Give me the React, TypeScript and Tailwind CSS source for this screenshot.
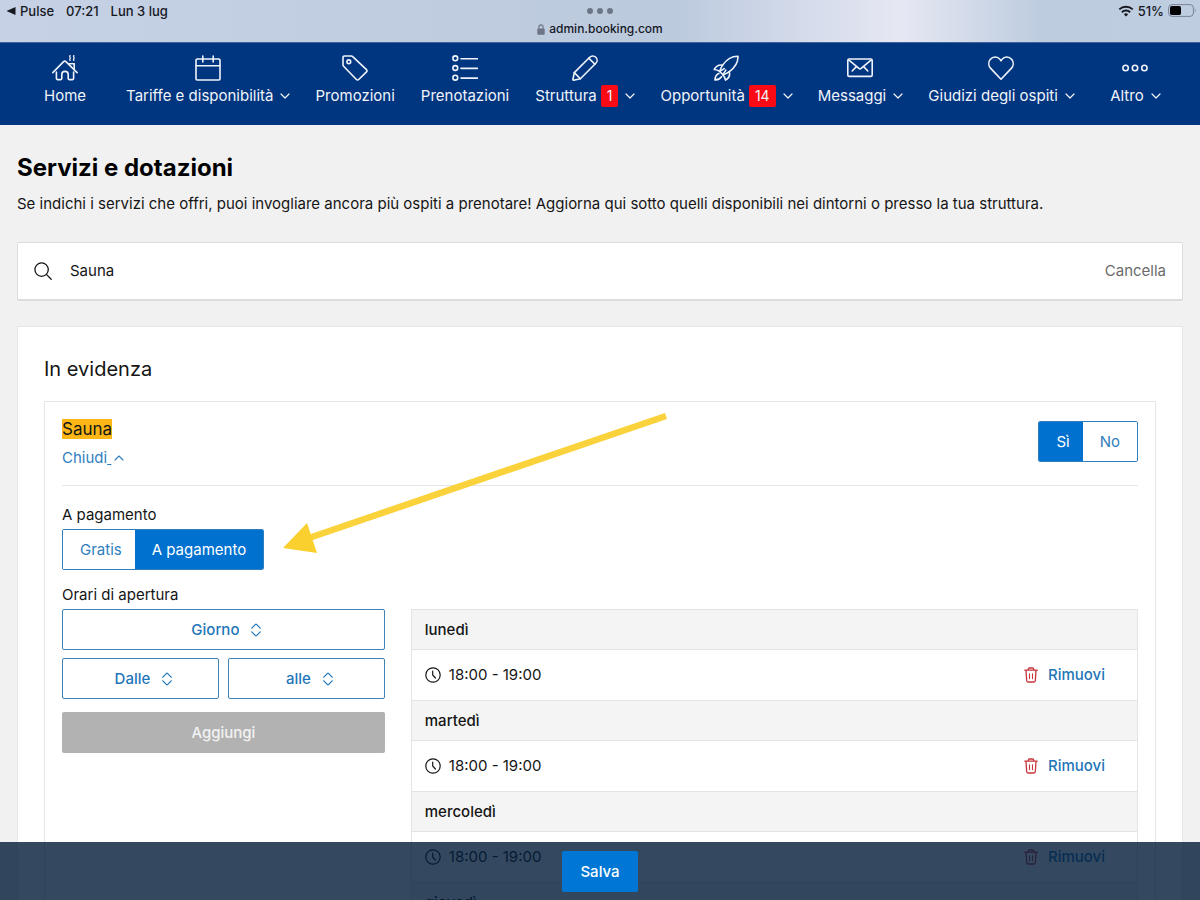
import { useState, type ReactNode } from "react";
import clsx from "clsx";
import { ChevronDown, ChevronUp } from "lucide-react";

type IconProps = { children: ReactNode; className?: string };

function Icon({ children, className = "size-[26px]" }: IconProps) {
  return (
    <svg
      viewBox="0 0 26 26"
      fill="none"
      stroke="currentColor"
      strokeWidth="1.6"
      strokeLinecap="round"
      strokeLinejoin="round"
      aria-hidden="true"
      className={className}
    >
      {children}
    </svg>
  );
}

const icons = {
  home: (
    <Icon>
      <path d="M.8 17.6 11.6 6.6a1.6 1.6 0 0 1 2.3 0l11.2 11" />
      <path d="M4.4 17v6.6a1 1 0 0 0 1 1h3.4a1 1 0 0 0 1-1v-4a3.2 3.2 0 0 1 6.4 0v4a1 1 0 0 0 1 1h3.4a1 1 0 0 0 1-1V17" />
      <path d="M17 8.800h5.200v5.200" />
      <path d="M18 .6c-1 1.300 1 1.900 0 3.200-.5.700-.3 1.200 0 1.600M21.800.6c-1 1.300 1 1.900 0 3.200-.5.700-.3 1.200 0 1.600" strokeWidth="1.3" />
    </Icon>
  ),
  calendar: (
    <Icon>
      <rect x="1" y="4" width="24" height="21" rx="1.2" />
      <path d="M1 10.800h24M7.800 1v6M18.200 1v6" />
    </Icon>
  ),
  tag: (
    <Icon>
      <path d="M2.300 1h7a2 2 0 0 1 1.400.6L24.500 14.600a1.600 1.600 0 0 1 0 2.300l-7.800 7.600a1.600 1.600 0 0 1-2.300 0L1.600 11.300a2 2 0 0 1-.6-1.400V2.300A1.300 1.300 0 0 1 2.300 1z" />
      <circle cx="6.800" cy="6.800" r="1.900" />
    </Icon>
  ),
  list: (
    <Icon>
      <circle cx="3.300" cy="3.300" r="2.400" />
      <circle cx="3.300" cy="13" r="2.400" />
      <circle cx="3.300" cy="22.700" r="2.400" />
      <path d="M9 3.700h16.500M9 13.400h16.500M9 23.100h16.500" />
    </Icon>
  ),
  pencil: (
    <Icon>
      <path d="M2.300 17.600 17.700 2.200a4.200 4.200 0 0 1 6.100 6.100L8.400 23.700l-6.800 1.500a.6.600 0 0 1-.7-.7z" />
      <path d="M2.300 17.600 8.400 23.700M16.800 3.100l6.100 6.100" />
    </Icon>
  ),
  rocket: (
    <Icon>
      <path d="M25 1.200c-6.300-.2-11.300 3.200-15 8.400-1.600 2.300-2.800 4.500-3.300 6.800l3.300 3.300c2.600-.7 4.700-1.900 6.700-3.400C22 12.300 25.200 7.300 25 1.200z" />
      <path d="M9.600 10.200c-3.600-.7-6.400.7-8.400 4.300 2.100.2 3.900.8 5.500 1.900M16.200 16.700c1.100 3.500-.2 6.400-3.700 8.400-.5-2.200-1.300-4-2.500-5.400" />
      <path d="M5.800 18.600c-2.400 1-3.600 3.200-3.900 6.300 2.700.2 4.900-.8 6.600-3.200M6.700 16.400l4.600-2.800M10 19.700l2.800-4.600" />
    </Icon>
  ),
  mail: (
    <Icon>
      <rect x="0.800" y="4" width="24.400" height="17.400" rx="1.400" />
      <path d="M2 5.200 11.900 13.400a1.800 1.800 0 0 0 2.200 0L24 5.200M5.200 16l4.400-4.600M20.800 16 16.400 11.400" />
    </Icon>
  ),
  heart: (
    <Icon>
      <path d="M13 24.200 2.700 13.400C.5 11 .2 7.200 2.200 4.600 4.900 1.200 9.600 1.100 12 4.400l1 1.400 1-1.400c2.400-3.300 7.100-3.200 9.800.2 2 2.600 1.700 6.400-.5 8.800z" />
    </Icon>
  ),
  more: (
    <Icon>
      <circle cx="3.600" cy="13" r="2.700" />
      <circle cx="13" cy="13" r="2.700" />
      <circle cx="22.400" cy="13" r="2.700" />
    </Icon>
  ),
};

const navItems = [
  { label: "Home", icon: icons.home },
  { label: "Tariffe e disponibilità", icon: icons.calendar, menu: true },
  { label: "Promozioni", icon: icons.tag },
  { label: "Prenotazioni", icon: icons.list },
  { label: "Struttura", icon: icons.pencil, menu: true, badge: 1 },
  { label: "Opportunità", icon: icons.rocket, menu: true, badge: 14 },
  { label: "Messaggi", icon: icons.mail, menu: true },
  { label: "Giudizi degli ospiti", icon: icons.heart, menu: true },
  { label: "Altro", icon: icons.more, menu: true },
];

const days = ["lunedì", "martedì", "mercoledì", "giovedì"];

function StatusBar() {
  return (
    <div className="grid h-[42px] shrink-0 grid-cols-3 bg-linear-to-r from-[#c6d1e5] via-[#bccade] via-55% to-[#bfcde0] text-[13px] font-medium text-[#15181f]">
      <div className="flex h-[21px] items-center gap-3 pl-1.5">
        <span className="flex items-center gap-1">
          <svg viewBox="0 0 10 10" className="size-2.5" fill="currentColor" aria-hidden="true">
            <path d="M9.500 1v8L.5 5z" />
          </svg>
          Pulse
        </span>
        <span>07:21</span>
        <span>Lun 3 lug</span>
      </div>
      <div className="flex flex-col items-center bg-linear-to-r from-transparent from-70% to-[#d3daea]">
        <div className="flex h-[21px] items-center gap-1">
          <i className="size-1.5 rounded-full bg-[#6d7688]" />
          <i className="size-1.5 rounded-full bg-[#6d7688]" />
          <i className="size-1.5 rounded-full bg-[#6d7688]" />
        </div>
        <div className="flex items-center gap-1 text-xs leading-4">
          <svg viewBox="0 0 8 11" className="h-[11px] w-2" aria-hidden="true">
            <rect x=".3" y="4.600" width="7.400" height="6.100" rx="1" fill="#6d7688" />
            <path d="M1.900 5V3a2.100 2.100 0 0 1 4.200 0v2" fill="none" stroke="#6d7688" strokeWidth="1.100" />
          </svg>
          admin.booking.com
        </div>
      </div>
      <div className="flex justify-end bg-linear-to-r from-[#d3daea] via-[#e6e8f3] via-25% to-transparent to-60%">
        <div className="flex h-[21px] items-center gap-1 pr-1">
          <svg viewBox="0 0 16 12" className="h-3 w-4" fill="none" stroke="currentColor" strokeWidth="1.900" aria-hidden="true">
            <path d="M1.300 4.400a9.600 9.600 0 0 1 13.400 0M3.900 7.200a5.900 5.900 0 0 1 8.200 0" />
            <path d="M8 11.600 5.900 9.400a3 3 0 0 1 4.200 0z" fill="currentColor" stroke="none" />
          </svg>
          51%
          <svg viewBox="0 0 28 13" className="h-[13px] w-7" fill="none" aria-hidden="true">
            <rect x=".6" y=".6" width="24.800" height="11.800" rx="3.400" stroke="#7b8496" />
            <rect x="2" y="2" width="11" height="9" rx="1.800" fill="#000" />
            <path d="M26.800 4.500c1 .4 1 3.600 0 4z" fill="#7b8496" />
          </svg>
        </div>
      </div>
    </div>
  );
}

function NavBar() {
  return (
    <nav className="flex h-[83px] shrink-0 justify-between border-t border-[#3f639b] bg-[#003580] px-[18px] pt-3 text-[#f0f4fa]">
      {navItems.map((item) => (
        <a key={item.label} href="#" className="flex min-w-[94px] flex-col items-center gap-1 px-3">
          {item.icon}
          <span className="flex h-[22px] items-center text-[15px] whitespace-nowrap">
            {item.label}
            {item.badge && (
              <span className="ml-1 rounded-xs bg-[#fa0a14] px-1.5 text-sm leading-[22px]">{item.badge}</span>
            )}
            {item.menu && <ChevronDown className="-mr-1 ml-1 size-4" strokeWidth={1.8} aria-hidden="true" />}
          </span>
        </a>
      ))}
    </nav>
  );
}

type ToggleProps = {
  label: string;
  options: string[];
  value: string;
  onChange: (value: string) => void;
};

function Toggle({ label, options, value, onChange }: ToggleProps) {
  return (
    <div role="group" aria-label={label} className="inline-flex h-[41px] overflow-hidden rounded-xs border border-[#2f7ebd]">
      {options.map((option) => (
        <button
          key={option}
          type="button"
          aria-pressed={option === value}
          onClick={() => onChange(option)}
          className={clsx("px-[17px] first:pr-[13px]", option === value ? "bg-[#0071cf] text-white" : "bg-white text-[#2f7ebd]")}
        >
          {option}
        </button>
      ))}
    </div>
  );
}

function Picker({ name, options, className }: { name: string; options: string[]; className?: string }) {
  return (
    <label
      className={clsx(
        "flex h-[41px] items-center justify-center gap-3 rounded-xs border border-[#3f83b5] bg-white pl-1.5 text-[#1f76b8]",
        className,
      )}
    >
      <select aria-label={name} defaultValue="" className="appearance-none field-sizing-content bg-transparent font-medium outline-none">
        <option value="">{name}</option>
        {options.map((option) => (
          <option key={option}>{option}</option>
        ))}
      </select>
      <svg viewBox="0 0 10 14" className="h-3.5 w-2.5" fill="none" stroke="currentColor" strokeWidth="1.200" strokeLinecap="round" strokeLinejoin="round" aria-hidden="true">
        <path d="M.8 5.200 4.500 1.400a.7.700 0 0 1 1 0L9.200 5.200M.8 8.800l3.700 3.800a.7.700 0 0 0 1 0L9.200 8.800" />
      </svg>
    </label>
  );
}

function DaySlot({ day }: { day: string }) {
  return (
    <section>
      <h4 className="flex h-[41px] items-center border-y border-[#e4e4e4] bg-[#f4f4f4] px-[13px] font-medium">{day}</h4>
      <div className="flex h-[50px] items-center justify-between pr-8 pl-[13px]">
        <span className="flex items-center gap-2">
          <svg viewBox="0 0 16 16" className="size-4" fill="none" stroke="currentColor" strokeWidth="1.200" strokeLinecap="round" aria-hidden="true">
            <circle cx="8" cy="8" r="7.200" />
            <path d="M7.700 4v4l2.700 3" />
          </svg>
          <span>18:00 - 19:00</span>
        </span>
        <button type="button" className="flex items-center gap-2.5 font-medium text-[#1f76b8]">
          <svg viewBox="0 0 14 16" className="h-4 w-3.5" fill="none" stroke="#c8353d" strokeWidth="1.300" strokeLinecap="round" strokeLinejoin="round" aria-hidden="true">
            <path d="M.8 3.200h12.400M4.300 3V2a1 1 0 0 1 1-1h3.400a1 1 0 0 1 1 1v1M2 3.400l.7 10.400a1.300 1.300 0 0 0 1.300 1.200h6a1.300 1.300 0 0 0 1.300-1.200L12 3.400" />
            <path d="M5.500 6.800v4.800M8.500 6.800v4.800" strokeWidth="1.100" />
          </svg>
          Rimuovi
        </button>
      </div>
    </section>
  );
}

export default function App() {
  const [available, setAvailable] = useState("Sì");
  const [price, setPrice] = useState("A pagamento");
  const [query, setQuery] = useState("Sauna");

  return (
    <div className="relative flex h-screen flex-col overflow-hidden bg-[#f1f1f1] font-[Inter,sans-serif] text-[15px] leading-5 text-[#151515]">
      <StatusBar />
      <NavBar />

      <main className="min-h-0 flex-1 overflow-y-auto px-[17px] pt-7 [scrollbar-width:none]">
        <h1 className="text-2xl leading-[30px] font-bold text-black">Servizi e dotazioni</h1>
        <p className="mt-[11px]">
          Se indichi i servizi che offri, puoi invogliare ancora più ospiti a prenotare! Aggiorna qui sotto quelli disponibili nei dintorni o presso la tua struttura.
        </p>

        {/* Search */}
        <div className="mt-7 flex h-[59px] items-center rounded-xs border border-b-2 border-[#dcdcdc] bg-white px-4">
          <svg viewBox="0 0 18 18" className="size-[18px]" fill="none" stroke="currentColor" strokeWidth="1.300" strokeLinecap="round" aria-hidden="true">
            <circle cx="7.600" cy="7.600" r="6.700" />
            <path d="m12.600 12.600 4.600 4.600" />
          </svg>
          <input
            type="text"
            aria-label="Cerca servizi"
            value={query}
            onChange={(e) => setQuery(e.target.value)}
            className="ml-[18px] min-w-0 flex-1 outline-none"
          />
          <button type="button" onClick={() => setQuery("")} className="text-[#6b6b6b]">
            Cancella
          </button>
        </div>

        <div className="mt-[25px] border border-[#e6e6e6] bg-white px-[26px] pt-7 pb-24">
          <h2 className="text-xl leading-7">In evidenza</h2>

          <div className="relative mt-[18px] border border-[#e6e6e6] px-[17px] pb-6">
            <div className="flex items-start justify-between border-b border-[#e6e6e6] pt-4 pb-[17px]">
              <div>
                <h3 className="text-[17px] leading-[22px]">
                  <mark className="bg-[#fcb716] text-inherit">Sauna</mark>
                </h3>
                <button type="button" className="mt-2 flex items-center text-[#2f7ebd]">
                  Chiudi
                  <span className="underline">&nbsp;</span>
                  <ChevronUp className="size-4" strokeWidth={1.6} aria-hidden="true" />
                </button>
              </div>
              <div className="pt-[3px]">
                <Toggle label="Sauna disponibile" options={["Sì", "No"]} value={available} onChange={setAvailable} />
              </div>
            </div>

            <p className="mt-[19px] mb-1">A pagamento</p>
            <div className="flex">
              <Toggle label="A pagamento" options={["Gratis", "A pagamento"]} value={price} onChange={setPrice} />
            </div>

            <p className="mt-[15px] mb-1">Orari di apertura</p>
            <div className="flex items-start gap-[26px]">
              <div className="grid w-[30%] grid-cols-2 gap-x-[9px] gap-y-2">
                <Picker name="Giorno" options={days} className="col-span-2" />
                <Picker name="Dalle" options={["18:00", "19:00"]} />
                <Picker name="alle" options={["18:00", "19:00"]} />
                <button type="button" disabled className="col-span-2 mt-[5px] h-[41px] rounded-xs bg-[#b2b2b2] font-medium text-[#f2f2f2]">
                  Aggiungi
                </button>
              </div>
              <div className="flex-1 border-x border-b border-[#e4e4e4]">
                {days.map((day) => (
                  <DaySlot key={day} day={day} />
                ))}
              </div>
            </div>

            {/* Arrow pointing at the price toggle */}
            <svg viewBox="0 0 386 142" className="pointer-events-none absolute top-2.5 left-[237px] h-[142px] w-[386px]" aria-hidden="true">
              <path d="M384 4 24 127" stroke="#fad23c" strokeWidth="6.500" />
              <path d="M1 136 25 111 35 141z" fill="#fad02f" />
            </svg>
          </div>
        </div>
      </main>

      <footer className="absolute inset-x-0 bottom-0 flex h-[58px] justify-center bg-[#011b38]/80 pt-[9px]">
        <button type="button" className="h-[41px] rounded-xs bg-[#0077d4] px-[18px] font-medium text-white">
          Salva
        </button>
      </footer>
    </div>
  );
}
